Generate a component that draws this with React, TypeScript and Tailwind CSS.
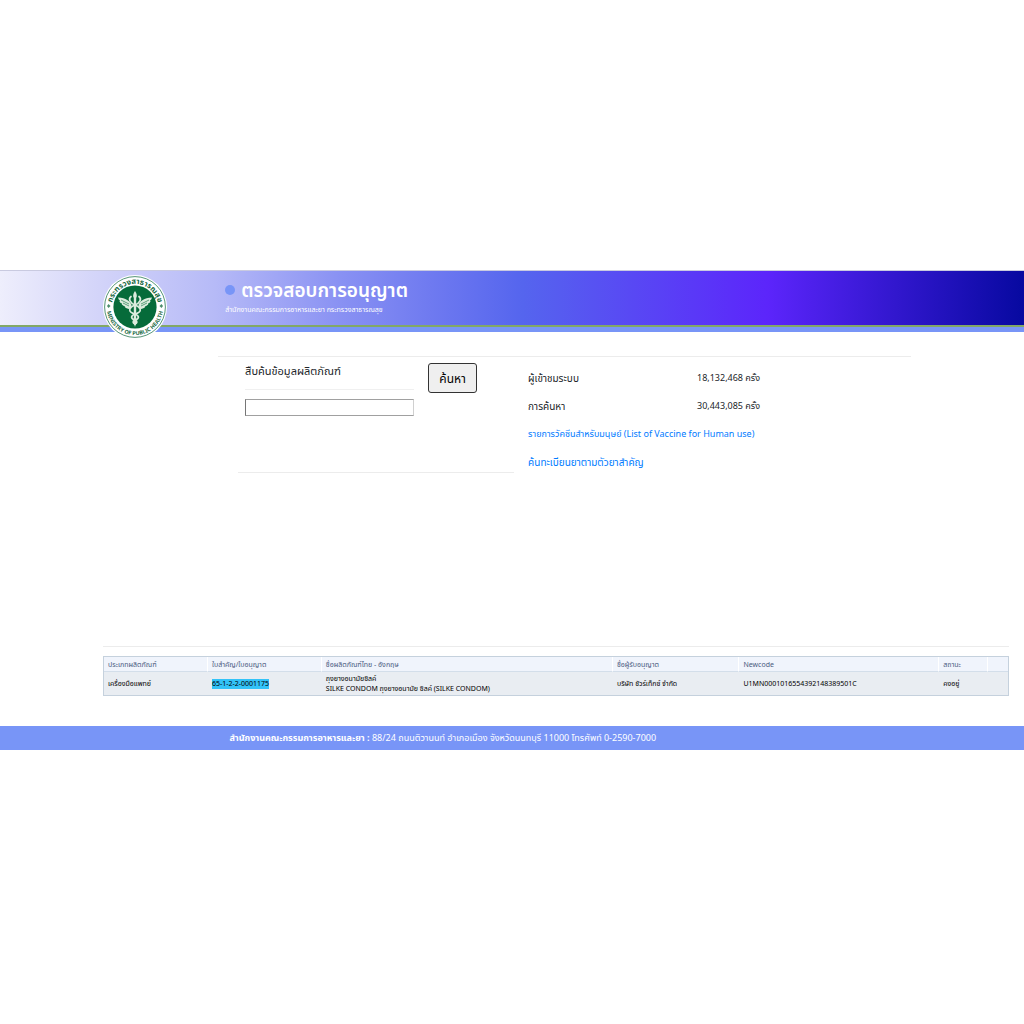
import type { ReactNode } from "react";

function MinistrySeal({ className }: { className: string }) {
  return (
    <svg viewBox="-32 -32 64 64" className={className} role="img" aria-label="กระทรวงสาธารณสุข Ministry of Public Health">
      <defs>
        <path id="seal-top" d="M-22.8 5 A23.3 23.3 0 1 1 22.8 5" />
        <path id="seal-bottom" d="M-28 4 A28.3 28.3 0 0 0 28 4" />
      </defs>
      <circle r="32" fill="#fff" />
      <circle r="30.4" fill="none" stroke="#2b7a54" strokeWidth="0.8" />
      <circle r="21.6" fill="#066b3a" />
      <text fill="#17683f" fontSize="7.6" fontWeight="700" textAnchor="middle">
        <textPath href="#seal-top" startOffset="50%">กระทรวงสาธารณสุข</textPath>
      </text>
      <text fill="#17683f" fontSize="5.4" fontWeight="700" textAnchor="middle">
        <textPath href="#seal-bottom" startOffset="50%">MINISTRY OF PUBLIC HEALTH</textPath>
      </text>
      <path d="M-28 -1 L-26.5 -3 L-24.5 -1 L-26.5 1Z M28 -1 L26.5 -3 L24.5 -1 L26.5 1Z" fill="#4b8d6b" />
      <g fill="#dcebdd">
        <path d="M0 -16 C2 -13 2.4 -11 1.2 -9 L1.2 16 L0 20 L-1.2 16 L-1.2 -9 C-2.4 -11 -2 -13 0 -16Z" />
        <path d="M-3.5 -2 C-5 -6 -9 -9 -17 -9.5 C-16.5 -8 -16 -7 -15 -6.4 L-15.5 -5.6 C-14.8 -4.4 -14 -3.8 -13 -3.4 L-13.2 -2.4 C-12 -1.4 -11 -0.8 -10 -0.6 L-9.6 0.8 C-7 2.4 -5 2 -3.5 1.2Z" />
        <path d="M3.5 -2 C5 -6 9 -9 17 -9.5 C16.5 -8 16 -7 15 -6.4 L15.5 -5.6 C14.8 -4.4 14 -3.8 13 -3.4 L13.2 -2.4 C12 -1.4 11 -0.8 10 -0.6 L9.6 0.8 C7 2.4 5 2 3.5 1.2Z" />
      </g>
      <g fill="none" stroke="#dcebdd" strokeWidth="1.7" strokeLinecap="round">
        <path d="M-4 -10.5 C-7 -8 -5 -4 0 -2 C7 1 7 5 0 7 C-5 9 -4 12 0 13 C3 14 2 16 0 17" />
        <path d="M4 -10.5 C7 -8 5 -4 0 -2 C-7 1 -7 5 0 7 C5 9 4 12 0 13 C-3 14 -2 16 0 17" />
      </g>
      <path d="M-14 -7 L-6 -3 M-12 -4 L-6 -1 M14 -7 L6 -3 M12 -4 L6 -1" stroke="#066b3a" strokeWidth="0.6" />
    </svg>
  );
}

function Header() {
  return (
    <header className="relative border-t border-[#c9cae0]">
      <div className="h-[54px] bg-[linear-gradient(90deg,#eeeefc_0%,#d2d3f9_10%,#b6baf7_21%,#8a92f3_33%,#6f7af0_42%,#5565ee_51%,#5c25fb_75%,#0709a0_100%)] pt-[6px] pl-[22%]">
        <div className="flex items-center gap-[6px]">
          <span className="mb-1 size-[10px] rounded-full bg-[#7895f7]" />
          <h1 className="text-[19px] leading-[29px] font-semibold whitespace-nowrap text-white">ตรวจสอบการอนุญาต</h1>
        </div>
        <p className="text-[7px] leading-[8px] whitespace-nowrap text-white">สำนักงานคณะกรรมการอาหารและยา กระทรวงสาธารณสุข</p>
      </div>
      <div className="h-[7px] border-t-2 border-[#82a866] bg-[#7895f7]" />
      <MinistrySeal className="absolute top-1 left-[103px] size-16" />
    </header>
  );
}

function Stat({ label, value }: { label: string; value: string }) {
  return (
    <div className="flex h-7 items-center justify-between">
      <dt className="text-[10px]">{label}</dt>
      <dd>{value}</dd>
    </div>
  );
}

function Th({ children }: { children?: ReactNode }) {
  return <th className="border-r border-b border-r-white border-b-[#d3deea] px-1 pt-px text-left font-normal last:border-r-0">{children}</th>;
}

function Td({ children }: { children?: ReactNode }) {
  return <td className="px-1 whitespace-nowrap">{children}</td>;
}

export default function App() {
  return (
    <div className="min-h-screen bg-white pt-[270px] font-['Segoe_UI','Noto_Sans_Thai','Noto_Sans','Open_Sans',sans-serif] text-[#212529]">
      <Header />
      <main>
        <section className="mt-6 mr-[11%] ml-[21.3%] grid h-[117px] grid-cols-[296px_1fr] items-start gap-[14px] border-t border-[#ececec]">
          <form className="ml-5 flex h-[116px] items-start gap-[14px] border-b border-[#ececec] pl-[7px]" onSubmit={(e) => e.preventDefault()}>
            <div className="w-[169px]">
              <label htmlFor="product" className="block h-[33px] border-b border-[#f0f0f0] pt-[5px] text-[11px] leading-5">
                สืบค้นข้อมูลผลิตภัณฑ์
              </label>
              <input
                id="product"
                type="text"
                className="mt-[9px] block h-[17px] w-full border border-t-[#a0a0a0] border-r-[#d0d0d0] border-b-[#a0a0a0] border-l-[#767676] px-1 text-[10px]"
              />
            </div>
            <button type="submit" className="mt-[6px] h-[30px] w-[49px] rounded-[3px] border border-[#333333] bg-[#efefef] pt-[2px] text-[12px] text-black">
              ค้นหา
            </button>
          </form>
          <div className="w-[232px] pt-2 text-[9px] whitespace-nowrap">
            <dl>
              <Stat label="ผู้เข้าชมระบบ" value="18,132,468 ครั้ง" />
              <Stat label="การค้นหา" value="30,443,085 ครั้ง" />
            </dl>
            <a href="#vaccine" className="flex h-7 items-center text-[#007bff]">
              <span>รายการวัคซีนสำหรับมนุษย์ (List of Vaccine for Human use)</span>
            </a>
            <a href="#ingredient" className="flex h-7 items-center text-[10px] text-[#007bff]">
              ค้นทะเบียนยาตามตัวยาสำคัญ
            </a>
          </div>
        </section>
        <section className="mt-[173px] mr-[15px] ml-[103px] border-t border-[#ececec] pt-[9px]">
          <table className="w-full table-fixed border-separate border-spacing-0 border border-[#c5d1dd] text-[7px] leading-[10px]">
            <colgroup>
              <col className="w-[11.5%]" />
              <col className="w-[12.6%]" />
              <col className="w-[32.2%]" />
              <col className="w-[14%]" />
              <col className="w-[22.1%]" />
              <col className="w-[5.4%]" />
              <col className="w-[2.2%]" />
            </colgroup>
            <thead>
              <tr className="h-[15px] bg-[#f0f4fc] text-[#4a5a80]">
                <Th>ประเภทผลิตภัณฑ์</Th>
                <Th>ใบสำคัญ/ใบอนุญาต</Th>
                <Th>ชื่อผลิตภัณฑ์ไทย - อังกฤษ</Th>
                <Th>ชื่อผู้รับอนุญาต</Th>
                <Th>Newcode</Th>
                <Th>สถานะ</Th>
                <Th />
              </tr>
            </thead>
            <tbody>
              <tr className="h-[23px] bg-[#e9edf2] text-black">
                <Td>เครื่องมือแพทย์</Td>
                <Td>
                  <mark className="bg-[#33c3f8]">65-1-2-2-0001175</mark>
                </Td>
                <Td>
                  ถุงยางอนามัยซิลค์
                  <br />
                  SILKE CONDOM ถุงยางอนามัย ซิลค์ (SILKE CONDOM)
                </Td>
                <Td>บริษัท ชัวร์เท็กซ์ จำกัด</Td>
                <Td>U1MN0001016554392148389501C</Td>
                <Td>คงอยู่</Td>
                <Td />
              </tr>
            </tbody>
          </table>
        </section>
      </main>
      <footer className="mt-[30px] flex h-6 items-center bg-[#7895f7] pt-px pl-[22.4%] text-[9px] whitespace-nowrap text-white">
        <p>
          <strong>สำนักงานคณะกรรมการอาหารและยา :</strong> 88/24 ถนนติวานนท์ อำเภอเมือง จังหวัดนนทบุรี 11000 โทรศัพท์ 0-2590-7000
        </p>
      </footer>
    </div>
  );
}
